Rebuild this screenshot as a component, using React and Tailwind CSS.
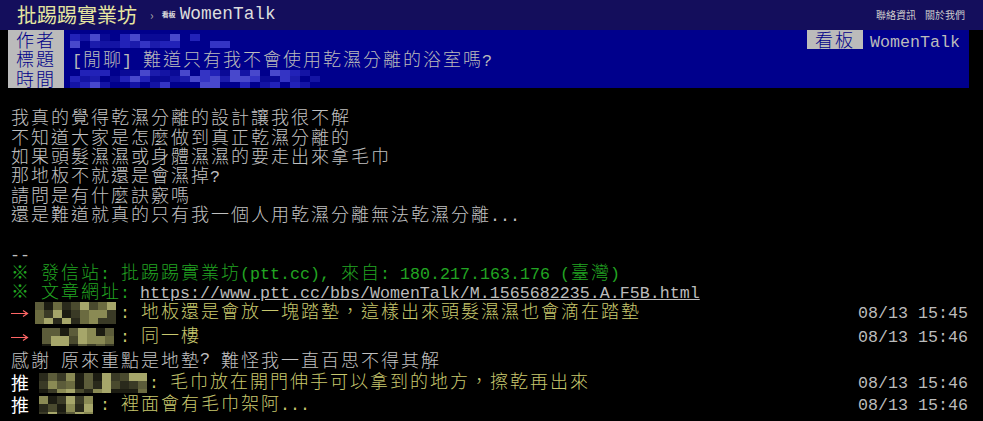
import React from 'react'

const BLUES = ['bg-[#00008c]', 'bg-[#1414a4]', 'bg-[#2222b8]', 'bg-[#0a0a96]', 'bg-[#3434c4]', 'bg-[#00008c]', 'bg-[#1c1cac]', 'bg-[#4848cc]']
const OLIVES = ['bg-[#2a2a1c]', 'bg-[#4a4a2e]', 'bg-[#6b6b40]', 'bg-[#8a8a54]', 'bg-[#3a3a26]', 'bg-[#5c5c3a]', 'bg-[#a6a66a]', 'bg-[#1c1c12]']

function Mosaic({ cols, rows, seed, palette, cell, className = '' }) {
  let s = seed
  const cells = []
  for (let i = 0; i < cols * rows; i++) {
    s = (s * 9301 + 49297) % 233280
    cells.push(palette[Math.floor((s / 233280) * palette.length)])
  }
  return (
    <div className={`flex flex-wrap shrink-0 overflow-hidden ${className}`}>
      {cells.map((c, i) => (
        <div key={i} className={`${cell} ${c}`} />
      ))}
    </div>
  )
}

// ascii runs get a half-width mono font so they sit on a 10px grid
function T({ children }) {
  const parts = String(children).split(/([\x00-\x7f]+)/)
  return parts.map((p, i) =>
    /^[\x00-\x7f]+$/.test(p) ? (
      <span key={i} className="font-['Liberation_Mono',monospace] text-[16.66px] tracking-normal whitespace-pre">{p}</span>
    ) : (
      <span key={i} className="pl-[1px] -mr-[1px]">{p}</span>
    )
  )
}

function Arrow() {
  return (
    <svg width="20" height="10" viewBox="0 0 20 10" className="shrink-0">
      <path d="M1 5.5H17M13 2.5L17.5 5.5L13 8.5" fill="none" stroke="#ff6666" strokeWidth="1.2" />
    </svg>
  )
}

const BODY = [
  '我真的覺得乾濕分離的設計讓我很不解',
  '不知道大家是怎麼做到真正乾濕分離的',
  '如果頭髮濕濕或身體濕濕的要走出來拿毛巾',
  '那地板不就還是會濕掉?',
  '請問是有什麼訣竅嗎',
  '還是難道就真的只有我一個人用乾濕分離無法乾濕分離...',
]

const PUSHES = [
  { tag: '→', h: 'h-[24px]', mosaic: 'ml-[5px] w-[85px] h-[22px]', cols: 10, seed: 11, text: '地板還是會放一塊踏墊，這樣出來頭髮濕濕也會滴在踏墊', time: '08/13 15:45' },
  { tag: '→', h: 'h-[24px]', mosaic: 'ml-[12px] w-[78px] h-[18px]', cols: 9, seed: 37, text: '同一樓', time: '08/13 15:46' },
  { line: '感謝 原來重點是地墊? 難怪我一直百思不得其解', h: 'h-[23px]' },
  { tag: '推', h: 'h-[22px]', mosaic: 'ml-[9px] w-[110px] h-[20px]', cols: 13, seed: 73, text: '毛巾放在開門伸手可以拿到的地方，擦乾再出來', time: '08/13 15:46' },
  { tag: '推', h: 'h-[22px]', mosaic: 'ml-[9px] w-[61px] h-[18px]', cols: 7, seed: 5, text: '裡面會有毛巾架阿...', time: '08/13 15:46' },
]

export default function App() {
  return (
    <div className="w-[983px] h-[421px] overflow-hidden bg-black text-[#c0c0c0] text-[18px] tracking-[2px] font-light leading-[19.33px] font-['Noto_Sans_CJK_TC',sans-serif]">
      {/* top bar */}
      <div className="h-[30px] bg-[#140e5c] flex items-center pl-[17px] pr-[18px] tracking-normal font-normal">
        <span className="text-[#e6e6a0] text-[20px] leading-[20px]">批踢踢實業坊</span>
        <span className="ml-[13px] text-[#aaaaaa] text-[12px]">›</span>
        <span className="ml-[8px] text-[#dddddd] text-[7px] font-bold">看板</span>
        <span className="ml-[4px] text-[#dddddd] font-['Liberation_Mono',monospace] text-[17.8px]">WomenTalk</span>
        <div className="ml-auto flex gap-[9px] text-[10px] leading-[10px] text-[#cccccc]">
          <span>聯絡資訊</span>
          <span>關於我們</span>
        </div>
      </div>

      {/* meta */}
      <div className="ml-[8px] w-[961px] bg-[#00008c]">
        <div className="flex h-[19.33px]">
          <span className="w-[56px] pl-[8px] bg-[#bbbbbb] text-[#000088]">作者</span>
          <Mosaic cols={16} rows={2} seed={3} palette={BLUES} cell="w-[10px] h-[7px]" className="ml-[6px] mt-[4px] w-[160px] h-[14px]" />
          <div className="ml-auto flex">
            <span className="w-[56px] pl-[8px] bg-[#bbbbbb] text-[#000088]">看板</span>
            <span className="pl-[7px] pr-[9px] text-[#bbbbbb]"><T>WomenTalk</T></span>
          </div>
        </div>
        <div className="flex h-[19.33px]">
          <span className="w-[56px] pl-[8px] bg-[#bbbbbb] text-[#000088]">標題</span>
          <span className="pl-[8px] text-[#bbbbbb] whitespace-pre"><T>[閒聊] 難道只有我不會使用乾濕分離的浴室嗎?</T></span>
        </div>
        <div className="flex h-[19.34px]">
          <span className="w-[56px] pl-[8px] bg-[#bbbbbb] text-[#000088]">時間</span>
          <Mosaic cols={25} rows={3} seed={21} palette={BLUES} cell="w-[10px] h-[6px]" className="ml-[6px] mt-[1px] w-[250px] h-[18px]" />
        </div>
      </div>

      {/* body */}
      <div className="pl-[10px] pr-[15px]">
        <div className="h-[19.33px]" />
        {BODY.map((l, i) => (
          <div key={i} className="h-[19.33px] whitespace-pre"><T>{l}</T></div>
        ))}
        <div className="h-[19.33px]" />
        <div className="h-[19.33px]"><T>--</T></div>
        <div className="h-[19.33px] text-[#22a522] whitespace-pre">
          <T>※ 發信站: 批踢踢實業坊(ptt.cc), 來自: 180.217.163.176 (臺灣)</T>
        </div>
        <div className="h-[19.33px] whitespace-pre">
          <span className="text-[#22a522]"><T>※ 文章網址: </T></span>
          <a className="underline text-[#bbbbbb]"><T>https://www.ptt.cc/bbs/WomenTalk/M.1565682235.A.F5B.html</T></a>
        </div>

        {PUSHES.map((p, i) =>
          p.line ? (
            <div key={i} className={`${p.h} flex items-center whitespace-pre`}><T>{p.line}</T></div>
          ) : (
            <div key={i} className={`${p.h} flex items-center whitespace-pre`}>
              {p.tag === '→' ? <Arrow /> : <span className="w-[20px] text-white font-normal"><T>{p.tag}</T></span>}
              <Mosaic cols={p.cols} rows={3} seed={p.seed} palette={OLIVES} cell="w-[9px] h-[8px]" className={p.mosaic} />
              <span className="text-[#c8c86e]"><T>{': ' + p.text}</T></span>
              <span className="ml-auto text-[#bbbbbb]"><T>{p.time}</T></span>
            </div>
          )
        )}
      </div>
    </div>
  )
}
